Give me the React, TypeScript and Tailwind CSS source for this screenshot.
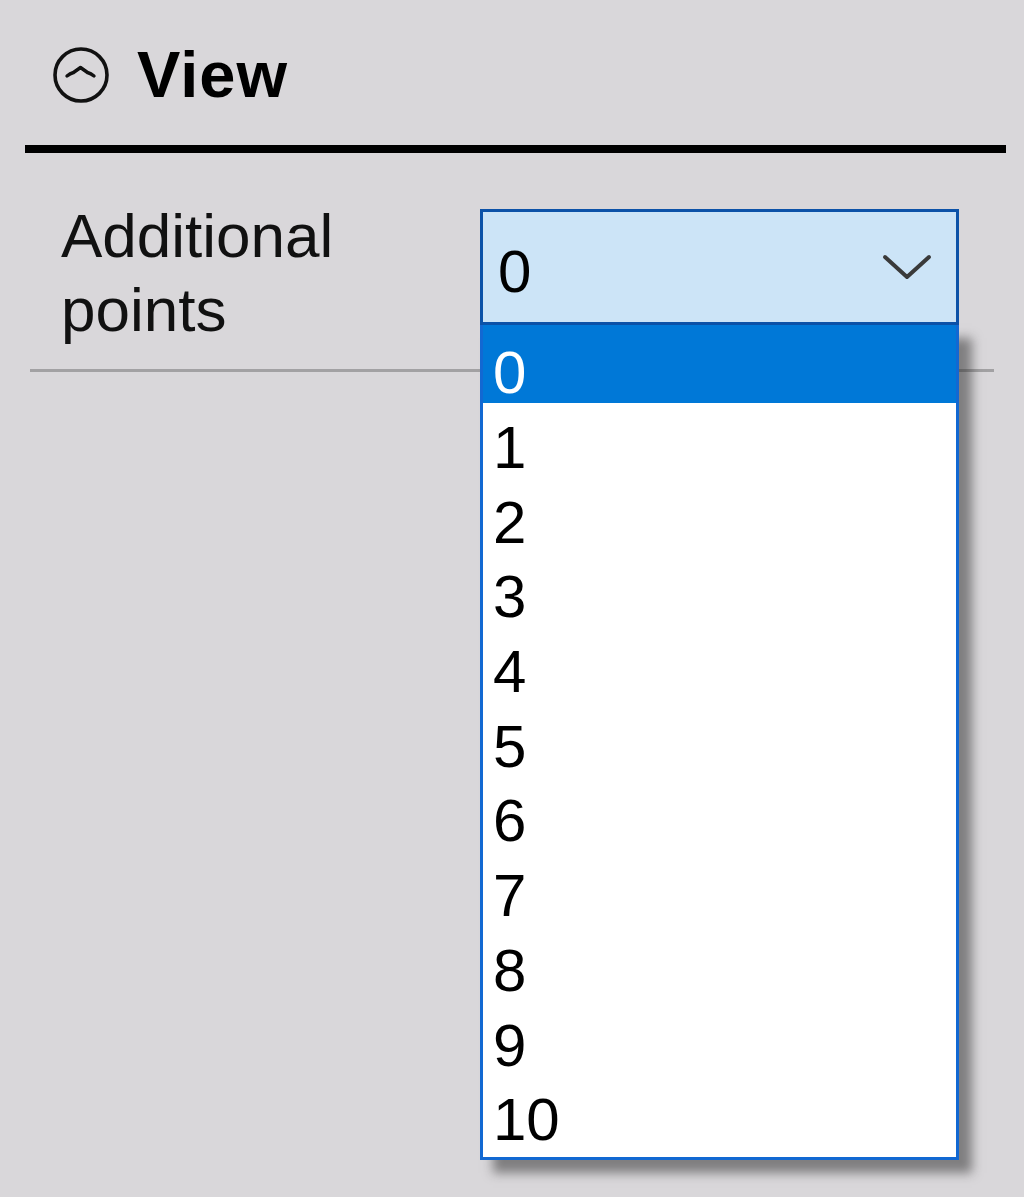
import React from 'react';

const options = ['0', '1', '2', '3', '4', '5', '6', '7', '8', '9', '10'];

// Collapse toggle in the section header
const CollapseIcon: React.FC = () => (
  <svg width="58" height="58" viewBox="0 0 58 58" fill="none" stroke="#111" strokeLinecap="round" strokeLinejoin="round">
    <circle cx="29" cy="29" r="26" strokeWidth="3.6" />
    <path d="M15 30 Q18 27.5 21.5 26.5 L28.5 21.5 L35.5 26.5 Q39 27.5 42 30" strokeWidth="3.4" />
  </svg>
);

const Chevron: React.FC = () => (
  <svg width="50" height="30" viewBox="0 0 50 30" fill="none" stroke="#3a3a3a" strokeWidth="4" strokeLinecap="round" strokeLinejoin="round">
    <path d="M3 5 L25 25 L47 5" />
  </svg>
);

const ComboBox: React.FC = () => (
  <div className="relative mt-[10px] w-[479px]">
    <div className="flex h-[116px] items-center justify-between border-[3px] border-[#0c52a8] bg-[#cce4f7] pl-[15px] pr-[24px]">
      <span className="mt-[10px] text-[60px] leading-none text-black">0</span>
      <Chevron />
    </div>
    {/* open drop-down list */}
    <div className="absolute left-0 top-full z-10 h-[835px] w-[479px] border-x-[3px] border-b-[3px] border-[#1268d2] bg-white shadow-[13px_13px_10px_rgba(40,40,40,0.5)]">
      {options.map((o, i) => (
        <div
          key={o}
          className={
            i === 0
              ? 'h-[78px] bg-[#0078d7] pl-[10px] pt-[18px] text-[60px] leading-none text-white'
              : 'h-[74.7px] pl-[10px] pt-[15px] text-[60px] leading-none text-black'
          }
        >
          {o}
        </div>
      ))}
    </div>
  </div>
);

export default function App() {
  return (
    <div className="h-[1197px] w-[1024px] overflow-hidden bg-[#d9d7da] font-['Liberation_Sans',Arial,sans-serif] text-[#111]">
      <div className="mt-[46px] flex h-[58px] items-center gap-[27px] pl-[52px]">
        <CollapseIcon />
        <span className="text-[65px] font-bold leading-[58px] tracking-[1px] text-black">View</span>
      </div>
      <div className="ml-[25px] mt-[41px] h-[8px] w-[981px] bg-black" />
      <div className="mt-[46px] flex items-start">
        <div className="w-[480px] pl-[61px] text-[62px] leading-[74px]">
          Additional
          <br />
          points
        </div>
        <ComboBox />
      </div>
      <div className="ml-[30px] mt-[22px] h-[3px] w-[964px] bg-[#a2a1a3]" />
    </div>
  );
}
